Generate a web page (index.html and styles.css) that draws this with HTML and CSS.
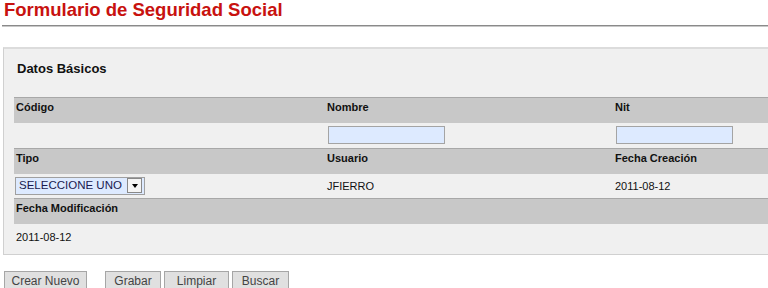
FILE: index.html
```html
<!DOCTYPE html>
<html lang="es">

<head>
    <meta charset="UTF-8">
    <title>Formulario de Seguridad Social</title>
    <link rel="stylesheet" href="styles.css">
</head>

<body>
    <h1 class="title">Formulario de Seguridad Social</h1>
    <div class="rule"></div>

    <div class="panel">
        <h2 class="panel-title">Datos Básicos</h2>
        <table class="grid">
            <tr class="head">
                <td class="c1">Código</td>
                <td class="c2">Nombre</td>
                <td class="c3">Nit</td>
            </tr>
            <tr class="body">
                <td></td>
                <td><input type="text" class="field"></td>
                <td><input type="text" class="field"></td>
            </tr>
            <tr class="head">
                <td>Tipo</td>
                <td>Usuario</td>
                <td>Fecha Creación</td>
            </tr>
            <tr class="body">
                <td>
                    <div class="select">
                        <span class="select-text">SELECCIONE UNO</span>
                        <span class="select-btn"><span class="arrow"></span></span>
                    </div>
                </td>
                <td>JFIERRO</td>
                <td>2011-08-12</td>
            </tr>
            <tr class="head">
                <td>Fecha Modificación</td>
                <td></td>
                <td></td>
            </tr>
            <tr class="body">
                <td>2011-08-12</td>
                <td></td>
                <td></td>
            </tr>
        </table>
    </div>

    <div class="actions">
        <button class="btn btn-new">Crear Nuevo</button>
        <button class="btn btn-save">Grabar</button>
        <button class="btn btn-clear">Limpiar</button>
        <button class="btn btn-find">Buscar</button>
    </div>
</body>

</html>
```

FILE: styles.css
```css
body {
    margin: 0;
    width: 768px;
    height: 288px;
    overflow: hidden;
    background: #fff;
    font-family: "Liberation Sans", Arial, sans-serif;
    color: #111;
}

.title {
    margin: 0;
    padding: 0 0 0 4px;
    height: 25px;
    line-height: 19px;
    font-size: 18.5px;
    font-weight: bold;
    color: #c8120f;
}

.rule {
    margin-left: 2px;
    border-top: 1px solid #8a8a8a;
    border-bottom: 1px solid #c8c8c8;
}

.panel {
    box-sizing: border-box;
    margin: 20px 0 0 3px;
    height: 208px;
    background: #f0f0f0;
    border-top: 2px solid #dcdcdc;
    border-left: 1px solid #d0d0d0;
    border-bottom: 1px solid #d0d0d0;
    padding: 0 0 0 10px;
}

.panel-title {
    margin: 0;
    padding: 12px 0 0 3px;
    height: 36px;
    font-size: 13px;
    line-height: 16px;
    font-weight: bold;
}

.grid {
    border-collapse: collapse;
    width: 770px;
    font-size: 11px;
}

.grid td {
    padding: 0 0 0 2px;
    vertical-align: middle;
}

.c1 {
    width: 309px;
}

.c2 {
    width: 286px;
}

.head td {
    background: #c8c8c8;
    border-top: 1px solid #a8a8a8;
    font-weight: bold;
    line-height: 13px;
    padding-top: 3px;
    padding-bottom: 9px;
}

.body td {
    background: #f0f0f0;
    height: 25px;
    line-height: 13px;
    padding-top: 2px;
    padding-bottom: 0;
    box-sizing: border-box;
}

.field {
    display: block;
    box-sizing: border-box;
    width: 117px;
    height: 18px;
    margin: 0 0 2px 1px;
    background: #ddeaff;
    border: 1px solid #a4a4a4;
}

.select {
    display: flex;
    box-sizing: border-box;
    width: 130px;
    height: 18px;
    margin: 0 0 2px -1px;
    background: #ddeaff;
    border: 1px solid #a0a0a0;
    align-items: center;
}

.select-text {
    flex: 1;
    padding-left: 3px;
    font-size: 11.5px;
    white-space: nowrap;
    color: #1a1a50;
}

.select-btn {
    display: flex;
    align-items: center;
    justify-content: center;
    width: 13px;
    height: 13px;
    margin-right: 2px;
    background: #f4f4f4;
    border: 1px solid #888;
}

.arrow {
    width: 0;
    height: 0;
    border-left: 3px solid transparent;
    border-right: 3px solid transparent;
    border-top: 4px solid #000;
}

.actions {
    display: flex;
    gap: 3px;
    margin: 16px 0 0 4px;
}

.btn {
    box-sizing: border-box;
    height: 19px;
    padding: 0;
    font-family: "Liberation Sans", Arial, sans-serif;
    font-size: 12px;
    white-space: nowrap;
    color: #444;
    background: #e0e0e0;
    border: 1px solid #a6a6a6;
    border-radius: 0;
}

.btn-new {
    width: 83px;
    margin-right: 15px;
}

.btn-save {
    width: 56px;
}

.btn-clear {
    width: 65px;
}

.btn-find {
    width: 57px;
}
```
